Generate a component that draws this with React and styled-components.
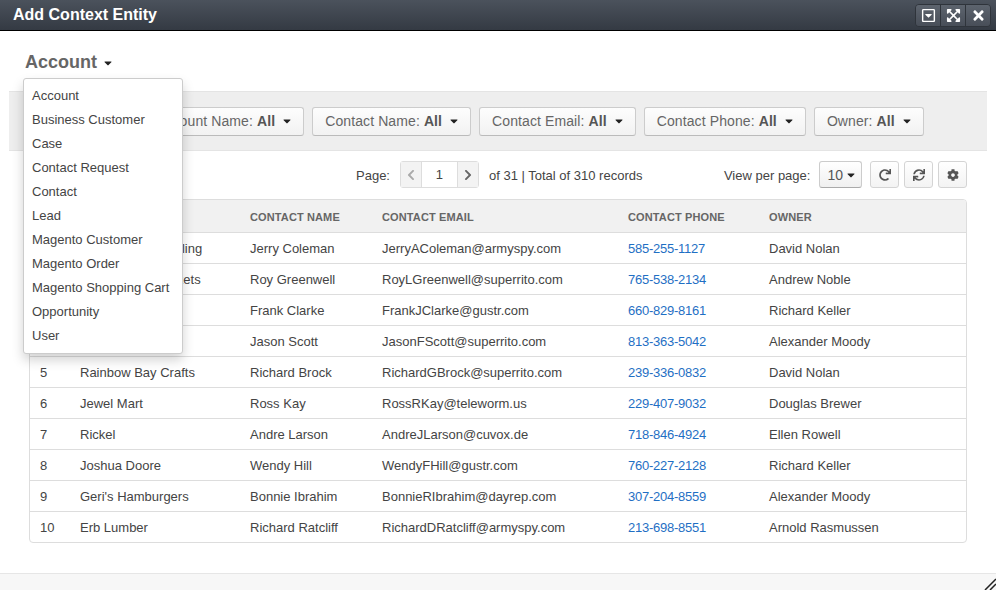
import React from 'react'
import styled, { createGlobalStyle } from 'styled-components'
import {
    FaCaretDown,
    FaChevronLeft,
    FaChevronRight,
    FaCog,
    FaExpandArrowsAlt,
    FaRedo,
    FaRegCaretSquareDown,
    FaSync,
    FaTimes,
} from 'react-icons/fa'

const GlobalStyle = createGlobalStyle`
    html, body {
        margin: 0;
        padding: 0;
        height: 100%;
        overflow: hidden;
        background: #fff;
    }
    body {
        font-family: "Liberation Sans", Arial, sans-serif;
        font-size: 13px;
        color: #444;
    }
`

const Dialog = styled('div')`
    display: flex;
    flex-direction: column;
    width: 996px;
    height: 590px;
`

const TitleBar = styled('div')`
    display: flex;
    align-items: center;
    justify-content: space-between;
    box-sizing: border-box;
    flex: none;
    height: 31px;
    padding: 0 0 0 13px;
    background: linear-gradient(#4b525c, #343a43);
    border-bottom: 1px solid #000;
`

const Title = styled('div')`
    color: #fff;
    font-size: 16px;
    font-weight: bold;
`

const WindowControls = styled('div')`
    display: flex;
    margin-right: 5px;
    border: 1px solid #2f343b;
    border-radius: 4px;
`

const WindowButton = styled('div')`
    display: flex;
    align-items: center;
    justify-content: center;
    width: 24px;
    height: 21px;
    color: #fff;
    font-size: 15px;
    background: linear-gradient(#5d646e, #484e58);
    border-left: ${props => (props.$first ? 'none' : '1px solid #2f343b')};
    border-radius: ${props => (props.$first ? '3px 0 0 3px' : props.$last ? '0 3px 3px 0' : '0')};
`

const Content = styled('div')`
    position: relative;
    display: flex;
    flex-direction: column;
    flex: 1;
`

const EntityHeader = styled('div')`
    display: flex;
    align-items: center;
    gap: 5px;
    box-sizing: border-box;
    height: 60px;
    padding: 3px 0 0 25px;
    color: #666;
    font-size: 18px;
    font-weight: bold;
`

const EntityCaret = styled('span')`
    display: flex;
    margin-top: 1px;
    color: #222;
    font-size: 12px;
`

const EntityMenu = styled('ul')`
    position: absolute;
    top: 47px;
    left: 23px;
    z-index: 10;
    box-sizing: border-box;
    width: 160px;
    height: 276px;
    margin: 0;
    padding: 5px 0;
    list-style: none;
    background: #fff;
    border: 1px solid #ccc;
    border-radius: 3px;
    box-shadow: 0 6px 12px rgba(0, 0, 0, 0.18);
`

const EntityMenuItem = styled('li')`
    height: 24px;
    padding-left: 8px;
    color: #444;
    line-height: 24px;
    white-space: nowrap;
`

const FilterBar = styled('div')`
    display: flex;
    align-items: center;
    gap: 8px;
    box-sizing: border-box;
    height: 60px;
    margin: 0 9px;
    padding: 0 0 0 27px;
    background: #eee;
    border-top: 1px solid #e4e4e4;
    border-bottom: 1px solid #e4e4e4;
`

const FilterButton = styled('div')`
    display: flex;
    align-items: center;
    box-sizing: border-box;
    height: 29px;
    padding: 0 10px 0 12px;
    color: #666;
    font-size: 14px;
    letter-spacing: 0.1px;
    white-space: nowrap;
    background: linear-gradient(#fdfdfd, #f2f2f2);
    border: 1px solid #ccc;
    border-bottom-color: #bbb;
    border-radius: 3px;

    b {
        margin-left: 4px;
        color: #555;
    }
`

const FilterCaret = styled('span')`
    display: flex;
    margin-left: 6px;
    color: #222;
    font-size: 12px;
`

const Pager = styled('div')`
    display: flex;
    align-items: center;
    box-sizing: border-box;
    height: 48px;
    padding: 0 29px 0 356px;
`

const PagerLabel = styled('span')`
    color: #444;
    white-space: nowrap;
`

const PageStepper = styled('div')`
    display: flex;
    box-sizing: border-box;
    height: 27px;
    margin: 0 10px 1px 10px;
    background: #fff;
    border: 1px solid #ddd;
    border-radius: 3px;
`

const PageArrow = styled('div')`
    display: flex;
    align-items: center;
    justify-content: center;
    width: 20px;
    color: ${props => (props.$disabled ? '#aaa' : '#666')};
    font-size: 12px;
    background: #f3f3f3;
`

const PageInput = styled('div')`
    width: 35px;
    color: #444;
    line-height: 25px;
    text-align: center;
    border-left: 1px solid #ddd;
    border-right: 1px solid #ddd;
`

const ViewGroup = styled('div')`
    display: flex;
    align-items: center;
    gap: 8px;
    margin-left: auto;
`

const PerPageButton = styled('div')`
    display: flex;
    align-items: center;
    gap: 2px;
    box-sizing: border-box;
    height: 27px;
    margin: 0 0 1px 1px;
    padding: 0 4px 0 7px;
    color: #555;
    font-size: 14px;
    background: linear-gradient(#fff, #f0f0f0);
    border: 1px solid #ccc;
    border-bottom-color: #aaa;
    border-radius: 3px;
`

const IconGroup = styled('div')`
    display: flex;
    gap: 5px;
    margin-bottom: 1px;
`

const IconButton = styled('div')`
    display: flex;
    align-items: center;
    justify-content: center;
    box-sizing: border-box;
    width: 29px;
    height: 27px;
    color: #555;
    font-size: 12px;
    background: linear-gradient(#fff, #f3f3f3);
    border: 1px solid #d4d4d4;
    border-radius: 3px;
`

const TableFrame = styled('div')`
    box-sizing: border-box;
    width: 938px;
    height: 344px;
    margin-left: 29px;
    overflow: hidden;
    border: 1px solid #ddd;
    border-radius: 4px;
`

const Table = styled('table')`
    width: 100%;
    table-layout: fixed;
    border-collapse: collapse;
`

const HeadCell = styled('th')`
    box-sizing: border-box;
    height: 32px;
    padding: 2px 0 0 10px;
    color: #666;
    font-size: 11px;
    font-weight: bold;
    letter-spacing: 0.12px;
    text-align: left;
    text-transform: uppercase;
    background: #f1f1f1;
    border-bottom: 1px solid #ddd;
`

const Cell = styled('td')`
    box-sizing: border-box;
    height: 31px;
    padding: 2px 0 0 10px;
    color: ${props => (props.$link ? '#1f6fc4' : '#444')};
    letter-spacing: ${props => (props.$link ? '-0.25px' : '0')};
    white-space: nowrap;
    border-top: ${props => (props.$firstRow ? 'none' : '1px solid #ddd')};
`

const Footer = styled('div')`
    position: relative;
    box-sizing: border-box;
    flex: none;
    height: 17px;
    margin-top: auto;
    background: #f7f7f7;
    border-top: 1px solid #e6e6e6;
`

const ResizeGrip = styled('svg')`
    position: absolute;
    right: 0;
    bottom: 0;
`

const columns = [
    { label: '#', width: 40 },
    { label: 'Account Name', width: 170 },
    { label: 'Contact Name', width: 132 },
    { label: 'Contact Email', width: 246 },
    { label: 'Contact Phone', width: 141 },
    { label: 'Owner', width: 207 },
]

const rows = [
    ['1', 'Sound Advice Sailing', 'Jerry Coleman', 'JerryAColeman@armyspy.com', '585-255-1127', 'David Nolan'],
    ['2', 'Great Lakes Markets', 'Roy Greenwell', 'RoyLGreenwell@superrito.com', '765-538-2134', 'Andrew Noble'],
    ['3', 'Bay Side Foods', 'Frank Clarke', 'FrankJClarke@gustr.com', '660-829-8161', 'Richard Keller'],
    ['4', 'Lone Star Diner', 'Jason Scott', 'JasonFScott@superrito.com', '813-363-5042', 'Alexander Moody'],
    ['5', 'Rainbow Bay Crafts', 'Richard Brock', 'RichardGBrock@superrito.com', '239-336-0832', 'David Nolan'],
    ['6', 'Jewel Mart', 'Ross Kay', 'RossRKay@teleworm.us', '229-407-9032', 'Douglas Brewer'],
    ['7', 'Rickel', 'Andre Larson', 'AndreJLarson@cuvox.de', '718-846-4924', 'Ellen Rowell'],
    ['8', 'Joshua Doore', 'Wendy Hill', 'WendyFHill@gustr.com', '760-227-2128', 'Richard Keller'],
    ['9', "Geri's Hamburgers", 'Bonnie Ibrahim', 'BonnieRIbrahim@dayrep.com', '307-204-8559', 'Alexander Moody'],
    ['10', 'Erb Lumber', 'Richard Ratcliff', 'RichardDRatcliff@armyspy.com', '213-698-8551', 'Arnold Rasmussen'],
]

const entities = [
    'Account',
    'Business Customer',
    'Case',
    'Contact Request',
    'Contact',
    'Lead',
    'Magento Customer',
    'Magento Order',
    'Magento Shopping Cart',
    'Opportunity',
    'User',
]

const filters = ['Type', 'Account Name', 'Contact Name', 'Contact Email', 'Contact Phone', 'Owner']

function App () {
    return (
        <>
        <GlobalStyle />
        <Dialog>
            <TitleBar>
                <Title>Add Context Entity</Title>
                <WindowControls>
                    <WindowButton $first><FaRegCaretSquareDown /></WindowButton>
                    <WindowButton><FaExpandArrowsAlt /></WindowButton>
                    <WindowButton $last><FaTimes /></WindowButton>
                </WindowControls>
            </TitleBar>
            <Content>
                <EntityHeader>
                    Account
                    <EntityCaret><FaCaretDown /></EntityCaret>
                </EntityHeader>
                <EntityMenu>
                    {entities.map(name => <EntityMenuItem key={name}>{name}</EntityMenuItem>)}
                </EntityMenu>
                <FilterBar>
                    {filters.map(name => (
                        <FilterButton key={name}>
                            {name}: <b>All</b>
                            <FilterCaret><FaCaretDown /></FilterCaret>
                        </FilterButton>
                    ))}
                </FilterBar>
                <Pager>
                    <PagerLabel>Page:</PagerLabel>
                    <PageStepper>
                        <PageArrow $disabled><FaChevronLeft /></PageArrow>
                        <PageInput>1</PageInput>
                        <PageArrow><FaChevronRight /></PageArrow>
                    </PageStepper>
                    <PagerLabel>of 31 | Total of 310 records</PagerLabel>
                    <ViewGroup>
                        <PagerLabel>View per page:</PagerLabel>
                        <PerPageButton>10 <FaCaretDown size={12} color="#222" /></PerPageButton>
                        <IconGroup>
                            <IconButton><FaRedo /></IconButton>
                            <IconButton><FaSync /></IconButton>
                            <IconButton><FaCog /></IconButton>
                        </IconGroup>
                    </ViewGroup>
                </Pager>
                <TableFrame>
                    <Table>
                        <colgroup>
                            {columns.map(col => <col key={col.label} width={col.width} />)}
                        </colgroup>
                        <thead>
                            <tr>
                                {columns.map(col => <HeadCell key={col.label}>{col.label}</HeadCell>)}
                            </tr>
                        </thead>
                        <tbody>
                            {rows.map((row, r) => (
                                <tr key={row[0]}>
                                    {row.map((value, c) => (
                                        <Cell key={c} $link={c === 4} $firstRow={r === 0}>{value}</Cell>
                                    ))}
                                </tr>
                            ))}
                        </tbody>
                    </Table>
                </TableFrame>
                <Footer>
                    <ResizeGrip width="14" height="14" viewBox="0 0 14 14">
                        <path d="M3 14 L14 3 M8 14 L14 8" stroke="#222" strokeWidth="1.5" fill="none" />
                    </ResizeGrip>
                </Footer>
            </Content>
        </Dialog>
        </>
    )
}

export default App
